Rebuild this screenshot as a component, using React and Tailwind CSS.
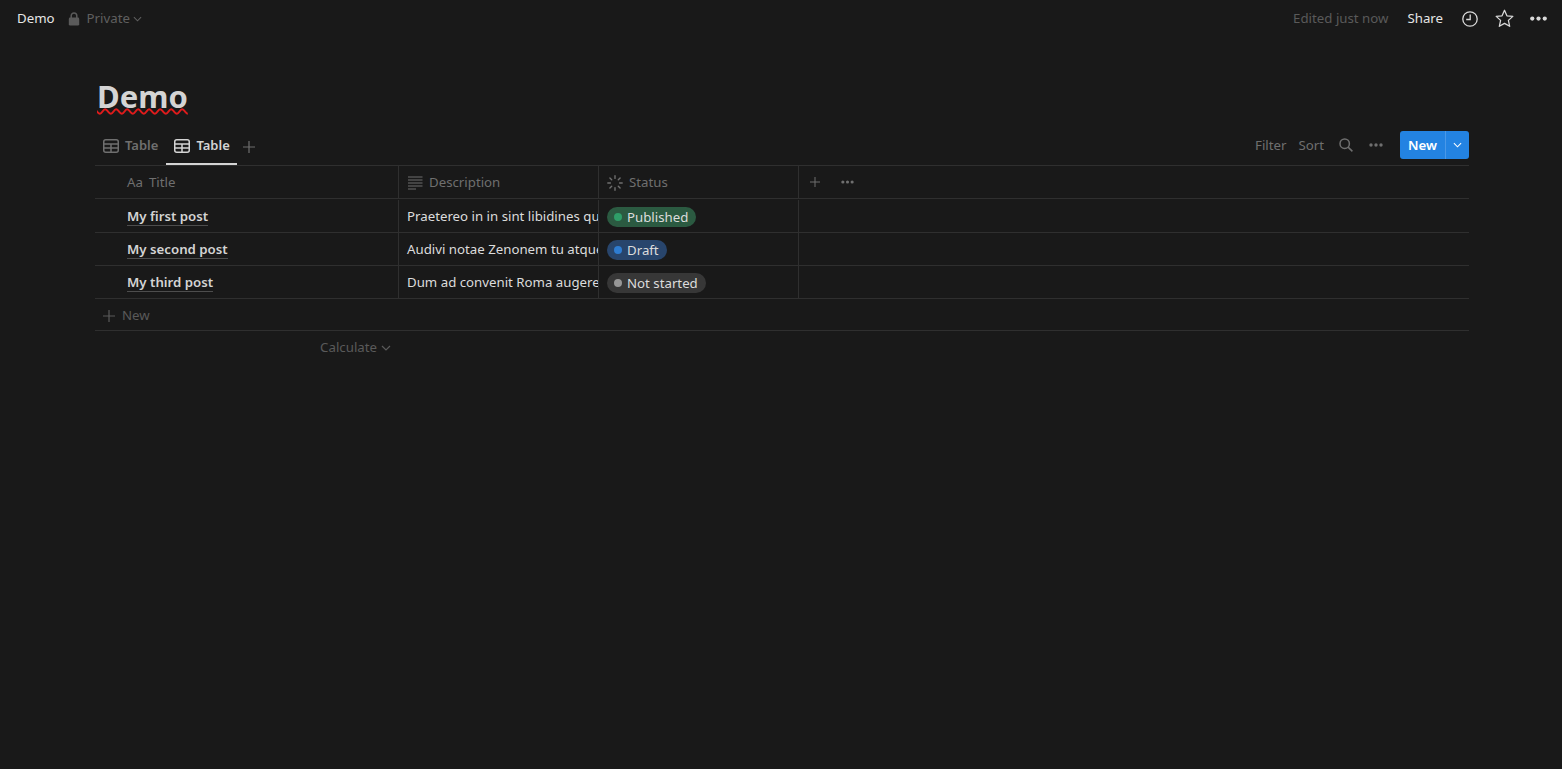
import { useState } from 'react';

const FONT = "font-['Noto_Sans',sans-serif]";

function TableIcon() {
  return (
    <svg viewBox="0 0 16 14" className="w-4 h-[14px] mr-[6px]" fill="none" stroke="currentColor" strokeWidth="1.5">
      <rect x="0.75" y="0.75" width="14.5" height="12.5" rx="2" />
      <path d="M0.75 5h14.5M0.75 9h14.5M8 5v8.25" />
    </svg>
  );
}

function Dots({ className }) {
  return (
    <svg viewBox="0 0 14 4" className={className} fill="currentColor">
      <circle cx="2" cy="2" r="1.7" />
      <circle cx="7" cy="2" r="1.7" />
      <circle cx="12" cy="2" r="1.7" />
    </svg>
  );
}

function PlusIcon({ className }) {
  return (
    <svg viewBox="0 0 12 12" className={className} fill="none" stroke="currentColor" strokeWidth="1.2">
      <path d="M6 0v12M0 6h12" />
    </svg>
  );
}

function Chevron({ className }) {
  return (
    <svg viewBox="0 0 10 6" className={className} fill="none" stroke="currentColor" strokeWidth="1.2">
      <path d="M1 1l4 4 4-4" />
    </svg>
  );
}

function LockIcon() {
  return (
    <svg viewBox="0 0 11 14" className="w-[12px] h-[14px] ml-[13px] text-[#5a5a5a]" fill="none" stroke="currentColor">
      <path d="M2.7 6V3.8a2.8 2.8 0 0 1 5.6 0V6" strokeWidth="1.5" />
      <rect x="0.3" y="5.6" width="10.4" height="8" rx="1.4" fill="currentColor" stroke="none" />
    </svg>
  );
}

function SearchIcon() {
  return (
    <svg viewBox="0 0 14 14" className="w-[14px] h-[14px] ml-[15px] text-[#6f6f6f]" fill="none" stroke="currentColor" strokeWidth="1.5">
      <circle cx="5.7" cy="5.7" r="4.7" />
      <path d="M9.1 9.1l4.3 4.3" />
    </svg>
  );
}

function TextIcon() {
  return (
    <svg viewBox="0 0 15 14" className="w-[15px] h-[14px]" fill="none" stroke="currentColor" strokeWidth="1.1">
      <path d="M0 1h14.5M0 4h14.5M0 7h14.5M0 10h14.5M0 13h8" />
    </svg>
  );
}

function StatusIcon() {
  return (
    <svg viewBox="0 0 16 16" className="w-4 h-4" fill="none" stroke="currentColor" strokeWidth="1.4" strokeLinecap="round">
      <path d="M8 .8v2.6M8 12.6v2.6M.8 8h2.6M12.6 8h2.6M2.9 2.9l1.8 1.8M11.3 11.3l1.8 1.8M2.9 13.1l1.8-1.8M11.3 4.7l1.8-1.8" />
    </svg>
  );
}

const rows = [
  { title: 'My first post', desc: 'Praetereo in in sint libidines quos sensus', status: 'Published', pill: 'bg-[#2b5a41]', dot: 'bg-[#2f9e68]', height: 'h-[34px] pt-px' },
  { title: 'My second post', desc: 'Audivi notae Zenonem tu atque ita quidem', status: 'Draft', pill: 'bg-[#28456c]', dot: 'bg-[#2e7cd1]', height: 'h-[33px]' },
  { title: 'My third post', desc: 'Dum ad convenit Roma augere posse tamen', status: 'Not started', pill: 'bg-[#373737]', dot: 'bg-[#979797]', height: 'h-[33px]' },
];

export default function App() {
  const [view] = useState(1);

  return (
    <div className={`${FONT} min-h-screen bg-[#191919] text-[13.25px] text-[#d4d4d4]`}>
      {/* top bar */}
      <div className="flex items-center justify-between h-[37px] pl-[17px] pr-[14px]">
        <div className="flex items-center">
          <span className="text-[#e6e6e6]">Demo</span>
          <LockIcon />
          <span className="ml-[7px] text-[#5f5f5f]">Private</span>
          <Chevron className="w-[9px] h-[6px] ml-[3px] text-[#5f5f5f]" />
        </div>
        <div className="flex items-center">
          <span className="text-[#5a5a5a]">Edited just now</span>
          <span className="ml-[19px] text-[#e6e6e6]">Share</span>
          <svg viewBox="0 0 16 16" className="w-4 h-4 ml-[19px] text-[#d9d9d9]" fill="none" stroke="currentColor" strokeWidth="1.3">
            <circle cx="8" cy="8" r="7.2" />
            <path d="M8.2 3.5v5H4.2" />
          </svg>
          <svg viewBox="0 0 18 18" className="w-[19px] h-[19px] ml-[17px] text-[#d9d9d9]" fill="none" stroke="currentColor" strokeWidth="1.2" strokeLinejoin="round">
            <path d="M9 1.2l2.3 5.2 5.6.6-4.2 3.8 1.2 5.6L9 13.6l-4.9 2.8 1.2-5.6L1.1 7l5.6-.6z" />
          </svg>
          <Dots className="w-[19px] h-[5px] ml-[15px] text-[#d9d9d9]" />
        </div>
      </div>

      <div className="w-[1562px] pl-[95px] pr-[93px]">
        <h1 className="pt-[40px] pl-[2px] h-[94px] text-[31px] leading-[38px] font-bold text-[#d4d4d4] underline decoration-wavy decoration-[#e01b1b] decoration-[1.5px] underline-offset-[0px]">
          Demo
        </h1>

        {/* views */}
        <div className="flex justify-between h-[35px] border-b border-[#2f2f2f]">
          <div className="flex items-center h-full text-[13px]">
            {['Table', 'Table'].map((name, i) => (
              <div
                key={i}
                className={
                  i === view
                    ? 'flex items-center h-full pl-2 pr-[7px] pb-[3px] border-b-2 border-[#d4d4d4] font-semibold text-[#d4d4d4]'
                    : 'flex items-center h-full px-2 pb-[3px] border-b-2 border-transparent font-semibold text-[#6f6f6f]'
                }
              >
                <TableIcon />
                {name}
              </div>
            ))}
            <div className="pb-[3px] ml-[6px] text-[#6f6f6f]">
              <PlusIcon className="w-3 h-3" />
            </div>
          </div>
          <div className="flex items-start">
            <span className="mt-[5px] text-[#6f6f6f]">Filter</span>
            <span className="mt-[5px] ml-[12px] text-[#6f6f6f]">Sort</span>
            <div className="mt-[7px]"><SearchIcon /></div>
            <Dots className="w-[14px] h-1 mt-[12px] ml-[16px] text-[#6f6f6f]" />
            <div className="flex items-center h-[28px] ml-[17px] rounded-[3px] bg-[#2383e2] text-white">
              <span className="px-[8px] pt-px font-semibold">New</span>
              <div className="flex items-center justify-center w-[24px] h-full border-l border-[#4a98e8]">
                <Chevron className="w-[9px] h-[6px]" />
              </div>
            </div>
          </div>
        </div>

        {/* header */}
        <div className="flex h-[33px] border-b border-[#2f2f2f] text-[#6f6f6f]">
          <div className="flex items-center w-[304px] pt-px pl-[32px] border-r border-[#2f2f2f]">
            <span>Aa</span>
            <span className="ml-[6px]">Title</span>
          </div>
          <div className="flex items-center w-[200px] pt-px pl-[9px] border-r border-[#2f2f2f]">
            <TextIcon />
            <span className="ml-[6px]">Description</span>
          </div>
          <div className="flex items-center w-[200px] pt-px pl-[8px] border-r border-[#2f2f2f]">
            <StatusIcon />
            <span className="ml-[6px]">Status</span>
          </div>
          <div className="flex items-center pl-[11px]">
            <PlusIcon className="w-[10px] h-[10px]" />
            <Dots className="w-[13px] h-1 ml-[21px]" />
          </div>
        </div>

        {rows.map((row) => (
          <div key={row.title} className={`flex ${row.height} border-b border-[#2f2f2f]`}>
            <div className="flex items-center w-[304px] pt-[2px] pl-[32px] border-r border-[#2f2f2f] font-semibold">
              <span className="border-b border-[#4d4d4d] leading-[17px]">{row.title}</span>
            </div>
            <div className="flex items-center w-[200px] pt-[2px] pl-[8px] border-r border-[#2f2f2f] overflow-hidden whitespace-nowrap text-[#dcdcdc]">
              {row.desc}
            </div>
            <div className="flex items-center w-[200px] pt-[2px] pl-[8px] border-r border-[#2f2f2f]">
              <span className={`flex items-center h-5 pl-[7px] pr-[8px] rounded-full text-[#dcdcdc] ${row.pill}`}>
                <span className={`w-2 h-2 mr-[5px] rounded-full ${row.dot}`} />
                <span className="pt-[2px]">{row.status}</span>
              </span>
            </div>
          </div>
        ))}

        <div className="flex items-center h-[32px] pt-[2px] pl-[8px] border-b border-[#2f2f2f] text-[#5a5a5a]">
          <PlusIcon className="w-3 h-3" />
          <span className="ml-[7px]">New</span>
        </div>

        <div className="flex items-center justify-end w-[304px] h-[33px] pr-[8px] text-[#5a5a5a]">
          Calculate
          <Chevron className="w-[10px] h-[6px] ml-[4px]" />
        </div>
      </div>
    </div>
  );
}
